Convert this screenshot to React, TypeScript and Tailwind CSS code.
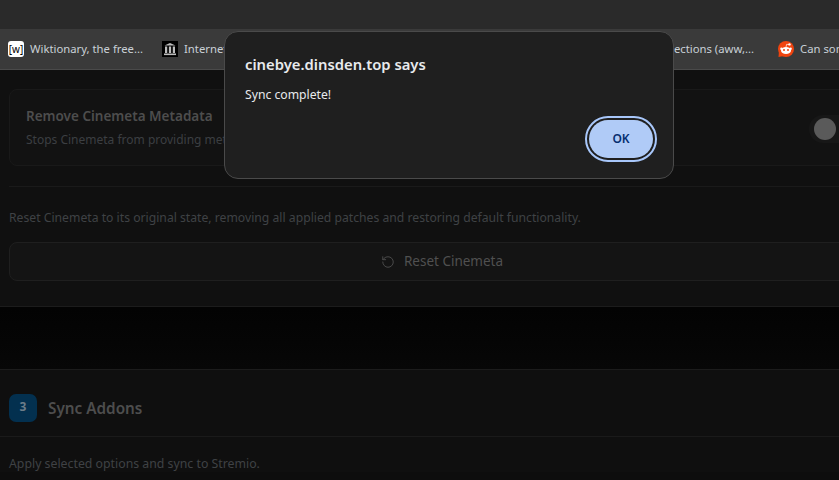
import { RotateCcw } from "lucide-react";

const font = { fontFamily: '"Noto Sans", "Open Sans", sans-serif' };

function Bookmark({ icon, label, className }: { icon: React.ReactNode; label: string; className: string }) {
  return (
    <div className={`flex shrink-0 items-center gap-[6px] ${className}`}>
      {icon}
      <span className="text-[11.3px] leading-none whitespace-nowrap text-[#c9d0d6]">{label}</span>
    </div>
  );
}

function RedditIcon() {
  return (
    <svg width="16" height="16" viewBox="0 0 16 16">
      <circle cx="8" cy="8" r="8" fill="#f0440f" />
      <path d="M1 10 L0.5 16 L6 15 Z" fill="#f0440f" />
      <ellipse cx="8" cy="9.5" rx="5" ry="3.6" fill="#fff" />
      <circle cx="3.4" cy="7.8" r="1.2" fill="#fff" />
      <circle cx="12.6" cy="7.8" r="1.2" fill="#fff" />
      <circle cx="11.5" cy="3.4" r="1.2" fill="#fff" />
      <path d="M8 6 L8.6 3.4 L11 3.4" fill="none" stroke="#fff" strokeWidth="0.7" />
      <circle cx="6" cy="9" r="1" fill="#f0440f" />
      <circle cx="10" cy="9" r="1" fill="#f0440f" />
    </svg>
  );
}

function ArchiveIcon() {
  return (
    <svg width="16" height="16" viewBox="0 0 16 16">
      <rect width="16" height="16" fill="#000" />
      <path d="M2.5 4.5 L8 2 L13.5 4.5 Z" fill="#bdbdbd" />
      <rect x="3" y="5.5" width="2.2" height="6.5" fill="#bdbdbd" />
      <rect x="6.9" y="5.5" width="2.2" height="6.5" fill="#bdbdbd" />
      <rect x="10.8" y="5.5" width="2.2" height="6.5" fill="#bdbdbd" />
      <rect x="2" y="12.5" width="12" height="1.6" fill="#bdbdbd" />
    </svg>
  );
}

export default function App() {
  return (
    <div className="relative h-[480px] w-[839px] overflow-hidden bg-[#0d0d0d]" style={font}>
      <div className="h-[29px] bg-[#2a2a2a]" />
      <div className="flex h-[41px] items-center overflow-hidden border-b border-[#4a4a4a] bg-[#3a3a3a] pl-[8px]">
        <Bookmark
          className="w-[154px]"
          label="Wiktionary, the free..."
          icon={
            <div className="flex h-4 w-4 items-center justify-center rounded-[3px] bg-white text-[10px] leading-none font-normal text-black">
              [w]
            </div>
          }
        />
        <Bookmark className="w-[453px]" label="Internet Archive" icon={<ArchiveIcon />} />
        <span className="w-[139px] shrink-0 text-right text-[11.3px] leading-none whitespace-nowrap text-[#c9d0d6]">
          ections (aww,...
        </span>
        <Bookmark className="ml-[24px]" label="Can som" icon={<RedditIcon />} />
      </div>

      <div className="h-[237px] w-[866px] border-b border-[#1c1c1c] bg-[#101010] px-[9px] pt-[19px]">
        <div className="flex h-[77px] w-[866px] items-center justify-between rounded-[8px] border border-[#191919] bg-[#121212] pr-[15px] pl-[16px]">
          <div className="-mt-[1px]">
            <h3 className="text-[13.5px] leading-[20px] font-semibold text-[#4d4d4d]">Remove Cinemeta Metadata</h3>
            <p className="mt-[6px] text-[12px] leading-[16px] text-[#3c3f42]">
              Stops Cinemeta from providing metadata
            </p>
          </div>
          <div className="mt-[2px] flex h-[28px] w-[50px] items-center rounded-full bg-[#171717] pl-[5px]">
            <div className="h-[22px] w-[22px] rounded-full bg-[#5a5a5a]" />
          </div>
        </div>
        <div className="mt-[20px] w-[866px] border-t border-[#1a1a1a] pt-[23px]">
          <p className="text-[12.2px] leading-[16px] text-[#3f4245]">
            Reset Cinemeta to its original state, removing all applied patches and restoring default functionality.
          </p>
        </div>
        <div className="mt-[16px] flex h-[39px] w-[866px] items-center justify-center gap-[9px] rounded-[8px] border border-[#1f1f1f] bg-[#141414] pt-[1px] text-[#505050]">
          <RotateCcw size={14} strokeWidth={1.5} />
          <span className="text-[13.5px] leading-none">Reset Cinemeta</span>
        </div>
      </div>

      <div className="h-[62px] bg-gradient-to-b from-[#030303] to-[#070707]" />

      <div className="border-t border-[#1c1c1c] bg-[#0f0f0f]">
        <div className="flex h-[67px] items-center gap-[11px] border-b border-[#1a1a1a] pt-[10px] pl-[9px]">
          <div className="flex h-[28px] w-[28px] items-center justify-center rounded-[7px] bg-[#03304f] pb-[2px] text-[12px] font-bold text-[#6d7d89]">
            3
          </div>
          <h2 className="mt-[2px] text-[15.3px] leading-none font-semibold text-[#4d4d4d]">Sync Addons</h2>
        </div>
        <p className="pt-[19px] pl-[9px] text-[12.3px] leading-[16px] text-[#3f4245]">
          Apply selected options and sync to Stremio.
        </p>
      </div>

      <div className="absolute top-[31px] left-[224px] h-[148px] w-[450px] rounded-[14px] border border-[#4a4a4a] bg-[#1f1f1f]">
        <h1 className="absolute top-[22px] left-[20px] text-[14.8px] leading-[20px] font-semibold text-[#e8eaed]">
          cinebye.dinsden.top says
        </h1>
        <p className="absolute top-[55px] left-[20px] text-[12.2px] leading-[16px] text-[#e8eaed]">Sync complete!</p>
        <div className="absolute top-[84px] left-[360px] rounded-full border-2 border-[#a8c7fa] p-[2px]">
          <button
            type="button"
            className="flex h-[38px] w-[64px] items-center justify-center rounded-full bg-[#b0cbf7] text-[12px] font-semibold text-[#062e6f]"
          >
            OK
          </button>
        </div>
      </div>
    </div>
  );
}
